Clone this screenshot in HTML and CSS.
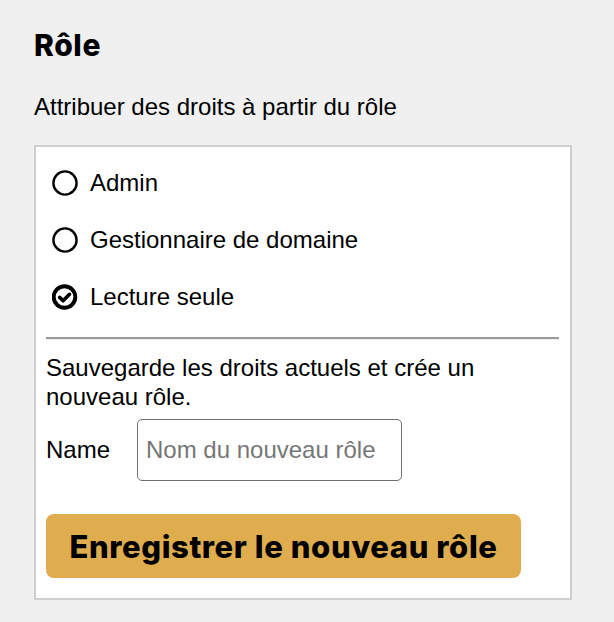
FILE: index.html
```html
<!DOCTYPE html>
<html lang="fr">
<head>
<meta charset="utf-8">
<title>Rôle</title>
<link rel="stylesheet" href="styles.css">
</head>
<body>
<div class="page">
  <h2 class="title">Rôle</h2>
  <p class="subtitle">Attribuer des droits à partir du rôle</p>
  <div class="panel">
    <ul class="roles">
      <li class="role">
        <svg class="icon" viewBox="0 0 26 26" width="26" height="26"><circle cx="13" cy="13" r="11.6" fill="none" stroke="#000" stroke-width="2.4"/></svg>
        <span>Admin</span>
      </li>
      <li class="role">
        <svg class="icon" viewBox="0 0 26 26" width="26" height="26"><circle cx="13" cy="13" r="11.6" fill="none" stroke="#000" stroke-width="2.4"/></svg>
        <span>Gestionnaire de domaine</span>
      </li>
      <li class="role">
        <svg class="icon" viewBox="0 0 26 26" width="26" height="26"><circle cx="12.5" cy="13" r="10.8" fill="none" stroke="#000" stroke-width="3.9"/><path d="M7.6 13.4 L11.1 16.8 L17.5 10.3" fill="none" stroke="#000" stroke-width="3.6" stroke-linecap="round" stroke-linejoin="round"/></svg>
        <span>Lecture seule</span>
      </li>
    </ul>
    <hr class="divider">
    <p class="desc">Sauvegarde les droits actuels et crée un nouveau rôle.</p>
    <div class="name-row">
      <label class="name-label" for="role-name">Name</label>
      <input class="name-input" id="role-name" type="text" placeholder="Nom du nouveau rôle">
    </div>
    <button class="save-btn" type="button">Enregistrer le nouveau rôle</button>
  </div>
</div>
</body>
</html>
```

FILE: styles.css
```css
html, body {
  margin: 0;
  padding: 0;
  background: #f0f0f0;
}

body {
  font-family: "Liberation Sans", Arial, sans-serif;
  color: #000;
}

.page {
  padding: 26px 42px 0 34px;
}

.title {
  margin: 0;
  font-family: Inter, "Liberation Sans", sans-serif;
  font-weight: 800;
  font-size: 30px;
  letter-spacing: 0.6px;
  line-height: 38px;
}

.subtitle {
  margin: 29px 0 0;
  font-size: 24px;
  line-height: 28px;
}

.panel {
  margin-top: 24px;
  background: #fff;
  border: 2px solid #cfcfcf;
  padding: 7px 11px 20px 10px;
}

.roles {
  list-style: none;
  margin: 0;
  padding: 0 0 0 6px;
}

.role {
  display: flex;
  align-items: center;
  gap: 12px;
  height: 57px;
  font-size: 24px;
}

.icon {
  flex: none;
  display: block;
}

.divider {
  margin: 12px 0 0;
  border: 0;
  border-top: 2px solid #9a9a9a;
  border-bottom: 1px solid #eeeeee;
  height: 0;
}

.desc {
  margin: 13px 0 0;
  font-size: 24px;
  line-height: 29px;
}

.name-row {
  display: flex;
  align-items: center;
  margin-top: 8px;
}

.name-label {
  font-size: 24px;
  width: 91px;
  flex: none;
}

.name-input {
  box-sizing: border-box;
  width: 265px;
  height: 62px;
  margin: 0;
  padding: 0 8px;
  border: 1px solid #707070;
  border-radius: 5px;
  font-family: "Liberation Sans", Arial, sans-serif;
  font-size: 24px;
  color: #000;
  background: #fff;
}

.name-input::placeholder {
  color: #767676;
}

.save-btn {
  display: block;
  margin-top: 33px;
  box-sizing: border-box;
  width: 475px;
  height: 64px;
  padding: 0;
  border: 0;
  border-radius: 8px;
  background: #dfad4d;
  color: #000;
  font-family: Inter, "Liberation Sans", sans-serif;
  font-weight: 800;
  font-size: 31px;
  letter-spacing: 0.6px;
  text-align: center;
}
```
